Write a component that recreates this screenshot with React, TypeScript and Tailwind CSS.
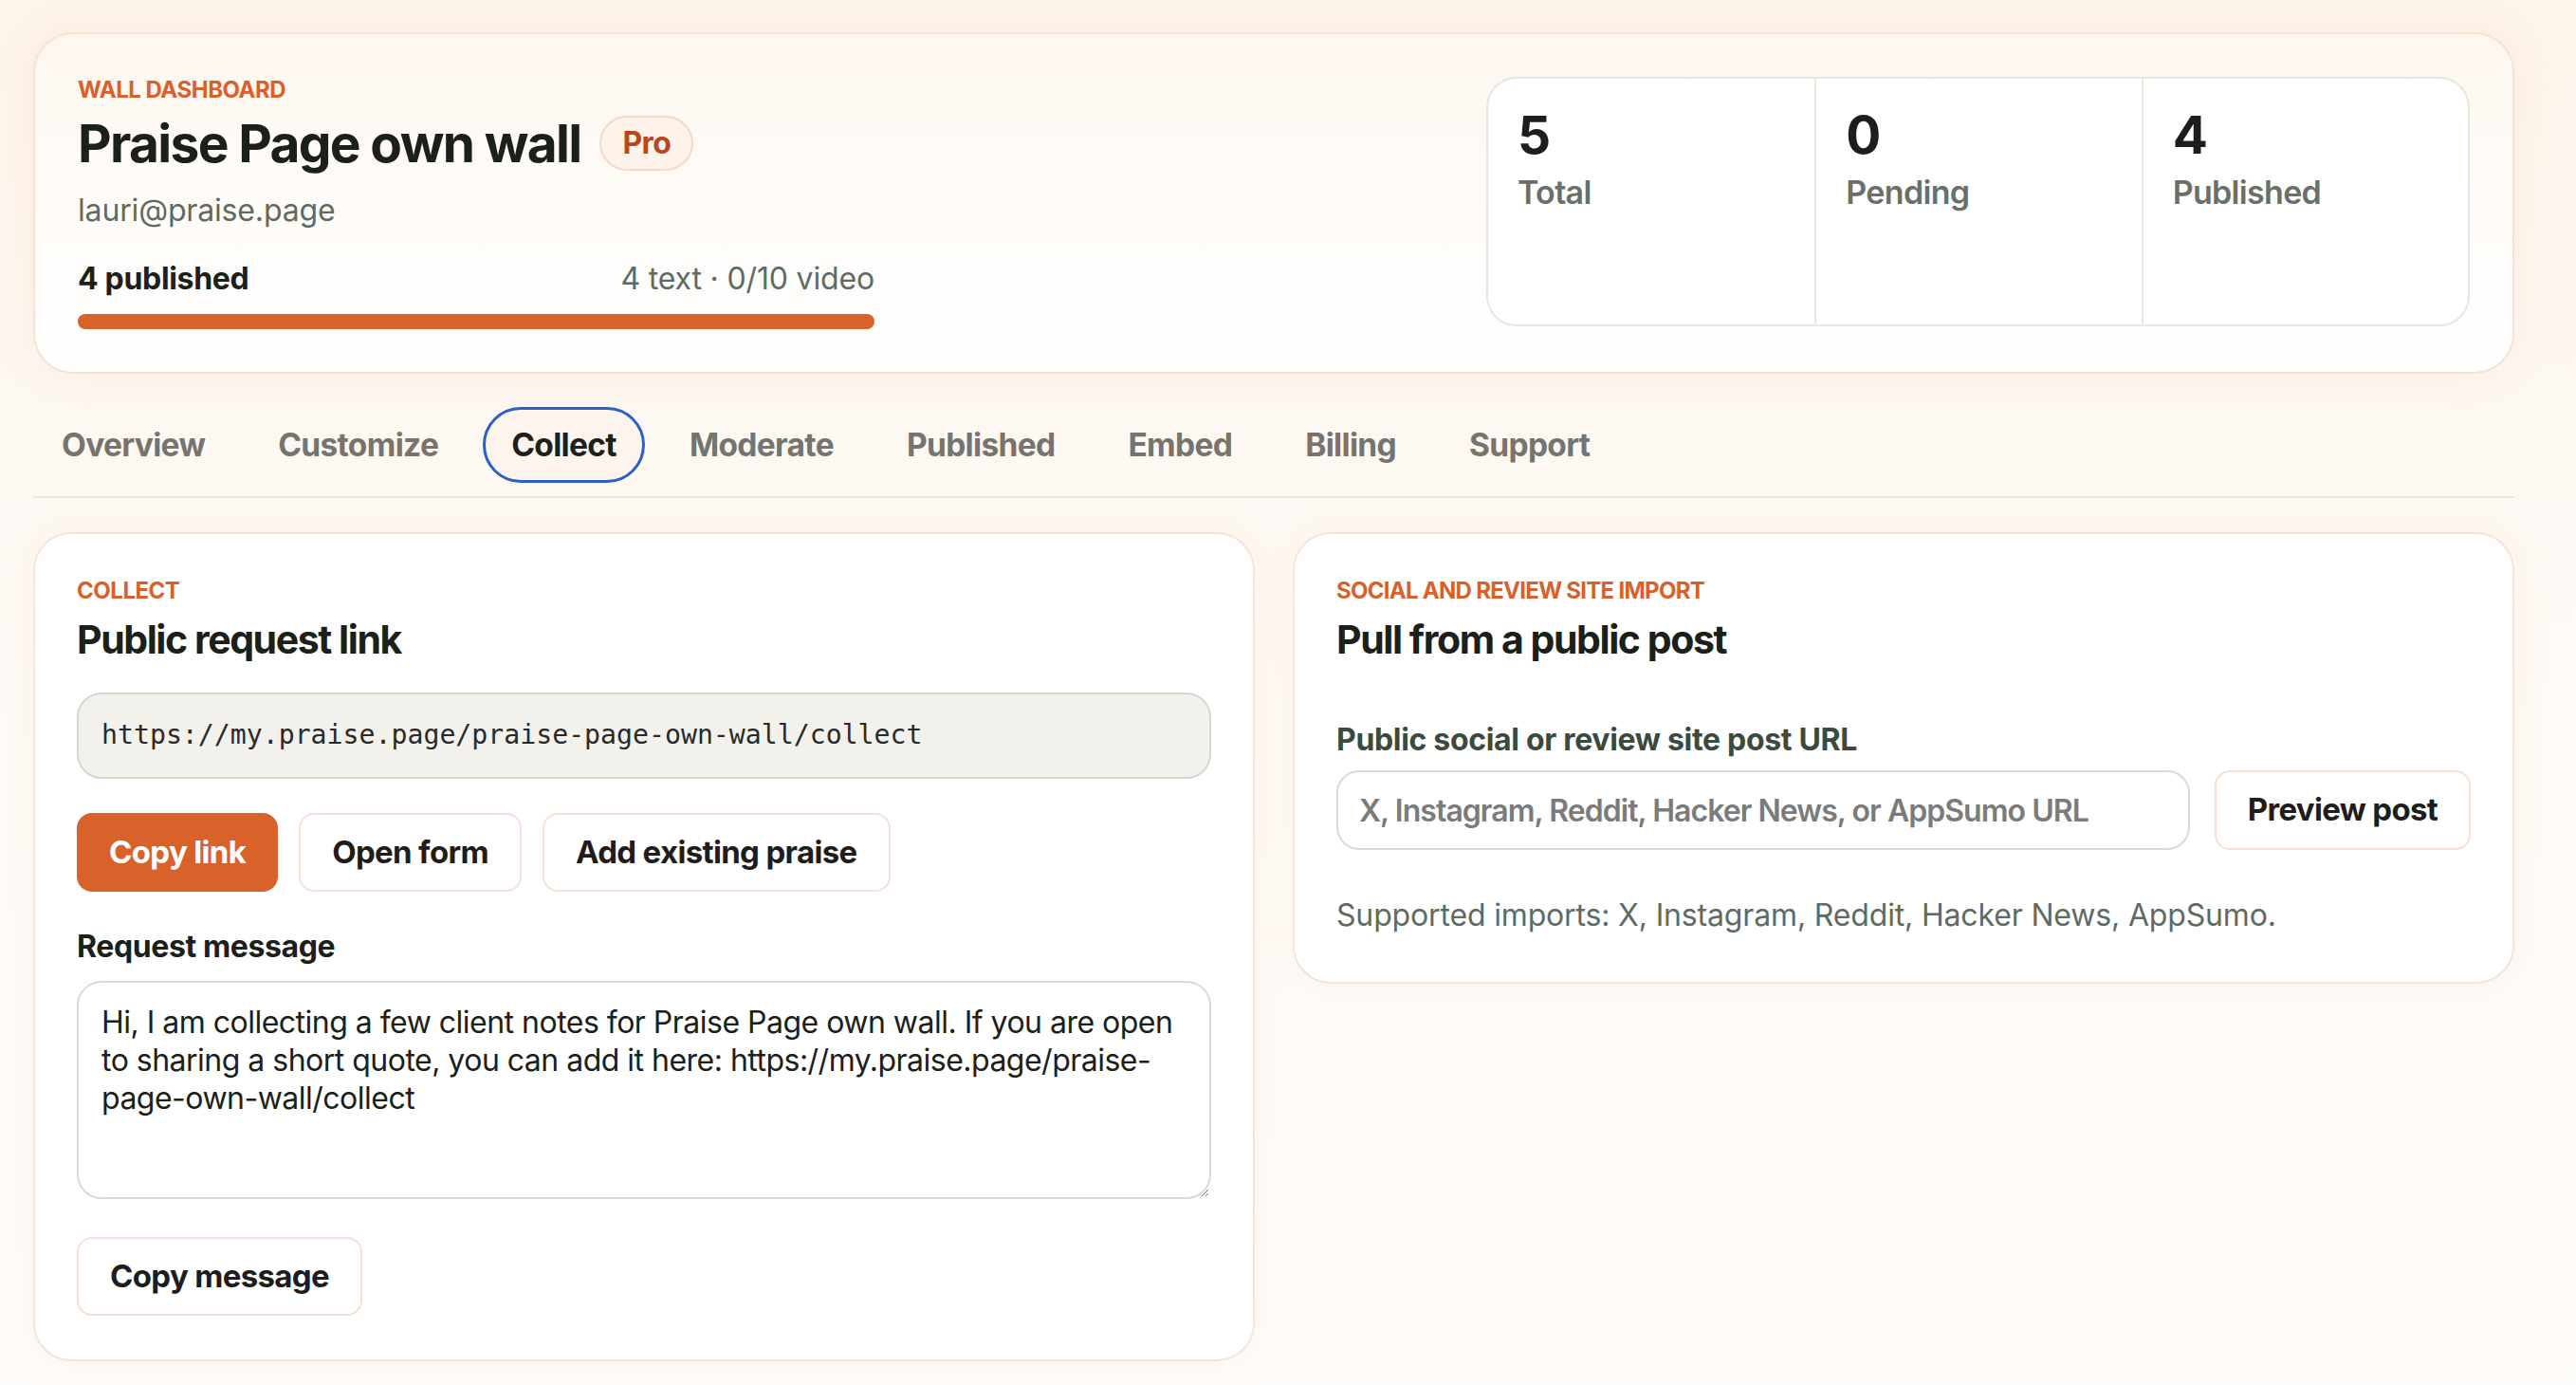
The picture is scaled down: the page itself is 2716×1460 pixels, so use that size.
import { useState } from "react";

const tabs = ["Overview", "Customize", "Collect", "Moderate", "Published", "Embed", "Billing", "Support"];

const stats = [
  { value: "5", label: "Total" },
  { value: "0", label: "Pending" },
  { value: "4", label: "Published" },
];

const requestLink = "https://my.praise.page/praise-page-own-wall/collect";

export default function App() {
  const [active, setActive] = useState("Collect");
  const [message, setMessage] = useState(
    "Hi, I am collecting a few client notes for Praise Page own wall. If you are open to sharing a short quote, you can add it here: " +
      requestLink
  );
  const [postUrl, setPostUrl] = useState("");

  return (
    <div className="min-h-screen w-full bg-gradient-to-b from-[#fdf4eb] via-[#fefaf6] to-[#fefcfa] font-['Inter',sans-serif] text-[#1b2119]">
      <div className="w-[2616px] ml-[35px] pt-[34px] pb-[28px]">
        {/* header card */}
        <div className="flex items-start justify-between rounded-[42px] border-2 border-[#f7e1d4] bg-gradient-to-b from-[#fef7f0] to-white p-[45px] shadow-[0_0_40px_rgba(240,170,120,0.12)]">
          <div className="w-[840px] pt-[2px]">
            <div className="text-[24px] font-bold uppercase leading-none tracking-[-0.02em] text-[#d8612b]">
              Wall dashboard
            </div>
            <div className="mt-[15px] flex items-center gap-[20px]">
              <h1 className="text-[55px] font-bold leading-none tracking-[-0.03em] text-[#1b2119]">
                Praise Page own wall
              </h1>
              <span className="flex h-[58px] items-center rounded-full border-2 border-[#f5d9c6] bg-[#fdf3ea] px-[22px] text-[32px] font-bold tracking-[-0.02em] text-[#b9471d]">
                Pro
              </span>
            </div>
            <div className="mt-[26px] text-[32px] leading-none tracking-[-0.005em] text-[#5e6b62]">lauri@praise.page</div>
            <div className="mt-[40px] flex items-end justify-between">
              <span className="text-[32px] font-bold leading-none tracking-[-0.01em] text-[#1b2119]">4 published</span>
              <span className="text-[32px] leading-none tracking-[-0.005em] text-[#5e6b62]">4 text · 0/10 video</span>
            </div>
            <div className="mt-[21px] h-[16px] w-full rounded-full bg-[#d9622b]" />
          </div>

          <div className="grid h-[263px] w-[1037px] grid-cols-3 overflow-hidden rounded-[32px] border-2 border-[#e9e6e1] bg-white">
            {stats.map((s, i) => (
              <div
                key={s.label}
                className={"px-[31px] pt-[32px] " + (i > 0 ? "border-l-2 border-[#e9e6e1]" : "")}
              >
                <div className="text-[55px] font-bold leading-none tracking-[-0.02em] text-[#1f1d1b]">{s.value}</div>
                <div className="mt-[16px] text-[34px] font-semibold leading-none tracking-[-0.02em] text-[#69706a]">
                  {s.label}
                </div>
              </div>
            ))}
          </div>
        </div>

        {/* tabs */}
        <div className="mt-[35px] flex gap-[17px] border-b-2 border-[#e8e5e1] pb-[14px]">
          {tabs.map((t) => (
            <button
              key={t}
              onClick={() => setActive(t)}
              className={
                "h-[80px] rounded-full border-[3px] px-[27px] text-[33.5px] font-bold tracking-[-0.02em] " +
                (active === t
                  ? "border-[#2b60c8] bg-[#fdf5ed] text-[#201f1c]"
                  : "border-transparent text-[#77736e]")
              }
            >
              {t}
            </button>
          ))}
        </div>

        {/* content */}
        <div className="mt-[36px] grid grid-cols-2 items-start gap-[40px]">
          {/* collect card */}
          <div className="rounded-[40px] border-2 border-[#f7e4d9] bg-white px-[44px] pt-[48px] pb-[46px] shadow-[0_0_40px_rgba(240,170,120,0.10)]">
            <div className="text-[24px] font-bold uppercase leading-none tracking-[-0.02em] text-[#d8612b]">Collect</div>
            <h2 className="mt-[19px] text-[41px] font-bold leading-none tracking-[-0.035em] text-[#1b2119]">
              Public request link
            </h2>
            <div className="mt-[35px] flex h-[91px] items-center rounded-[26px] border-2 border-[#d9d6cf] bg-[#f3f1ec] px-[24px] font-['DejaVu_Sans_Mono',monospace] text-[28.2px] text-[#2a2a28]">
              {requestLink}
            </div>
            <div className="mt-[36px] flex gap-[22px]">
              <button className="h-[83px] rounded-[16px] bg-[#d9622b] px-[34px] text-[33px] font-bold tracking-[-0.02em] text-white">
                Copy link
              </button>
              <button className="h-[83px] rounded-[16px] border-2 border-[#f6e0d6] bg-white px-[33px] text-[33px] font-bold tracking-[-0.02em] text-[#1f1d1b]">
                Open form
              </button>
              <button className="h-[83px] rounded-[16px] border-2 border-[#f6e0d6] bg-white px-[33px] text-[33px] font-bold tracking-[-0.02em] text-[#1f1d1b]">
                Add existing praise
              </button>
            </div>
            <label className="mt-[42px] block text-[32px] font-bold leading-none tracking-[-0.012em] text-[#1b2119]">
              Request message
            </label>
            <textarea
              value={message}
              onChange={(e) => setMessage(e.target.value)}
              className="mt-[20px] block h-[230px] w-full resize-y rounded-[26px] border-2 border-[#dadada] bg-white px-[24px] pt-[22px] pb-[16px] text-[32px] leading-[40px] tracking-[-0.016em] text-[#1b2119] outline-none"
            />
            <button className="mt-[40px] h-[83px] rounded-[16px] border-2 border-[#f6e0d6] bg-white px-[33px] text-[33px] font-bold tracking-[-0.02em] text-[#1f1d1b]">
              Copy message
            </button>
          </div>

          {/* import card */}
          <div className="rounded-[40px] border-2 border-[#f7e4d9] bg-white px-[44px] pt-[48px] pb-[54px] shadow-[0_0_40px_rgba(240,170,120,0.10)]">
            <div className="text-[24px] font-bold uppercase leading-none tracking-[-0.03em] text-[#d8612b]">
              Social and review site import
            </div>
            <h2 className="mt-[19px] text-[41px] font-bold leading-none tracking-[-0.035em] text-[#1b2119]">
              Pull from a public post
            </h2>
            <label className="mt-[69px] block text-[32px] font-bold leading-none tracking-[-0.01em] text-[#3a4a3e]">
              Public social or review site post URL
            </label>
            <div className="mt-[16px] flex gap-[26px]">
              <input
                value={postUrl}
                onChange={(e) => setPostUrl(e.target.value)}
                placeholder="X, Instagram, Reddit, Hacker News, or AppSumo URL"
                className="h-[84px] flex-1 rounded-[24px] border-2 border-[#dadada] bg-white px-[22px] text-[32px] font-semibold tracking-[-0.03em] text-[#1b2119] outline-none placeholder:text-[#7a7b7b]"
              />
              <button className="h-[84px] w-[270px] rounded-[16px] border-2 border-[#f6e0d6] bg-white text-[33px] font-bold tracking-[-0.02em] text-[#1f1d1b]">
                Preview post
              </button>
            </div>
            <p className="mt-[53px] text-[32px] leading-none tracking-[-0.005em] text-[#5e6b62]">
              Supported imports: X, Instagram, Reddit, Hacker News, AppSumo.
            </p>
          </div>
        </div>
      </div>
    </div>
  );
}
